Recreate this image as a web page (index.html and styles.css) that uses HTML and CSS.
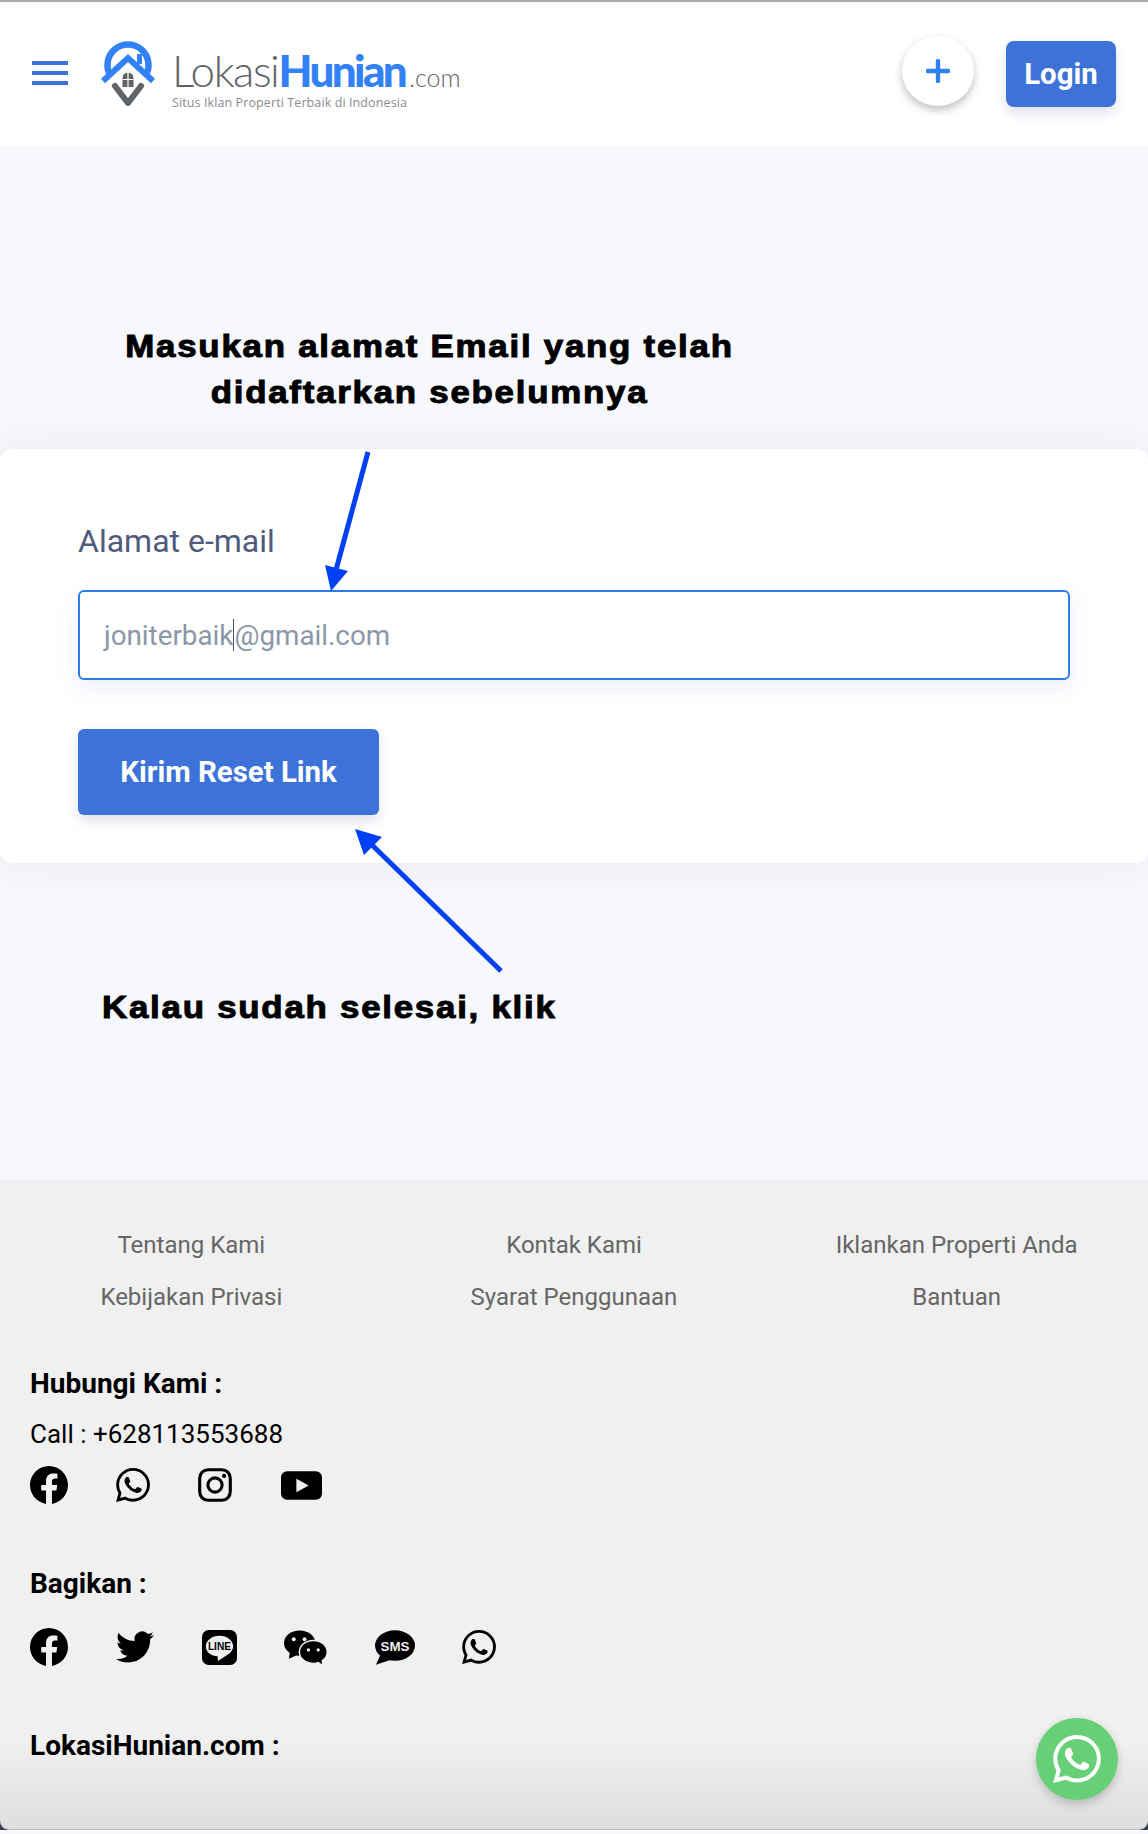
FILE: index.html
```html
<!DOCTYPE html>
<html>

<head>
    <title>Reset Password</title>
    <meta charset="utf-8">
    <link rel="stylesheet" href="styles.css">
</head>

<body>
    <header class="topbar">
        <div class="menu"><span></span><span></span><span></span></div>
        <div class="logo">
            <svg class="logo_icon" viewBox="0 0 56 66">
                <path d="M10.7 36 A20.5 20.5 0 1 1 45.3 36" fill="none" stroke="#3281f7" stroke-width="6.5" />
                <rect x="37" y="14" width="5" height="10" fill="#3281f7" />
                <path d="M3 41 L28 18 L53 41" fill="none" stroke="#3281f7" stroke-width="6" />
                <path d="M15 46 L28 63 L41 46" fill="none" stroke="#5f6368" stroke-width="6" stroke-linejoin="round" stroke-linecap="round" />
                <path d="M22.5 47 V38 A5.5 5.5 0 0 1 33.5 38 V47 Z" fill="#5f6368" />
                <path d="M28 32 V47 M22.5 39.5 H33.5" stroke="#fff" stroke-width="1.2" />
            </svg>
            <div class="logo_text">
                <div class="logo_name"><span class="logo_a">Lokasi</span><span class="logo_b">Hunian</span><span class="logo_c">.com</span></div>
                <div class="logo_tag">Situs Iklan Properti Terbaik di Indonesia</div>
            </div>
        </div>
        <div class="top_right">
            <a class="plus"><svg viewBox="0 0 24 24" width="24" height="24"><path d="M12 2 V22 M2 12 H22" stroke="#2f80f5" stroke-width="4.4" stroke-linecap="round" /></svg></a>
            <a class="btn btn_login">Login</a>
        </div>
    </header>

    <main class="content">
        <h2 class="note note_top">Masukan alamat Email yang telah<br>didaftarkan sebelumnya</h2>
        <section class="card">
            <label class="field_label">Alamat e-mail</label>
            <div class="field"><span>joniterbaik</span><i class="caret"></i><span>@gmail.com</span></div>
            <a class="btn btn_send">Kirim Reset Link</a>
        </section>
        <h2 class="note note_bottom">Kalau sudah selesai, klik</h2>
        <svg class="arrows" viewBox="0 0 1148 1034" width="1148" height="1034">
            <path d="M368 306 L336 424" stroke="#0040f5" stroke-width="5" fill="none" />
            <path d="M331 445 L325 419 L348 425 Z" fill="#0040f5" />
            <path d="M501 825 L370 697" stroke="#0040f5" stroke-width="5" fill="none" />
            <path d="M355 683 L382 691 L364 709 Z" fill="#0040f5" />
        </svg>
    </main>

    <div class="foot_wrap">
        <footer class="footer">
            <div class="foot_links">
                <a>Tentang Kami</a><a>Kontak Kami</a><a>Iklankan Properti Anda</a>
                <a>Kebijakan Privasi</a><a>Syarat Penggunaan</a><a>Bantuan</a>
            </div>

            <h4 class="foot_title">Hubungi Kami :</h4>
            <div class="call">Call : +628113553688</div>
            <div class="icons icons_contact">
                <svg viewBox="0 0 24 24" class="ic ic_fb"><use href="#fb" /></svg>
                <svg viewBox="0 0 24 24" class="ic ic_wa"><use href="#wa" /></svg>
                <svg viewBox="0 0 24 24" class="ic ic_ig">
                    <rect x="1.2" y="1.2" width="21.6" height="21.6" rx="6" fill="none" stroke="#000" stroke-width="2.2" />
                    <circle cx="12" cy="12" r="5" fill="none" stroke="#000" stroke-width="2.2" />
                    <circle cx="18.4" cy="5.6" r="1.5" />
                </svg>
                <svg viewBox="0 0 40 28" class="ic ic_yt">
                    <rect x="0" y="0" width="40" height="28" rx="6" />
                    <path d="M15 7.5 L27 14 L15 20.5 Z" fill="#f0f0f0" />
                </svg>
            </div>

            <h4 class="foot_title foot_share">Bagikan :</h4>
            <div class="icons icons_share">
                <svg viewBox="0 0 24 24" class="ic ic_fb"><use href="#fb" /></svg>
                <svg viewBox="0 0 24 24" class="ic ic_tw"><use href="#tw" /></svg>
                <svg viewBox="0 0 36 36" class="ic ic_line">
                    <rect width="36" height="36" rx="7" />
                    <path d="M18 6 C10 6 4 11 4 17 C4 23 10 27 16 27 L16.500 32 L27 25 C30 23 32 20 32 17 C32 11 26 6 18 6 Z" fill="#f0f0f0" />
                    <text x="18" y="21" class="line_text">LINE</text>
                </svg>
                <svg viewBox="0 0 44 36" class="ic ic_wc">
                    <ellipse cx="16" cy="14" rx="16" ry="13" />
                    <path d="M6 23 L5 30 L14 26 Z" />
                    <ellipse cx="30" cy="23" rx="15" ry="12.5" fill="#f0f0f0" />
                    <ellipse cx="30" cy="23" rx="13.5" ry="11" />
                    <path d="M34 32 L39 36 L38 29 Z" />
                    <circle cx="10" cy="10" r="2" fill="#f0f0f0" />
                    <circle cx="21" cy="10" r="2" fill="#f0f0f0" />
                    <circle cx="25" cy="21" r="1.7" fill="#f0f0f0" />
                    <circle cx="35" cy="21" r="1.7" fill="#f0f0f0" />
                </svg>
                <svg viewBox="0 0 42 36" class="ic ic_sms">
                    <ellipse cx="21" cy="16" rx="21" ry="16" />
                    <path d="M6 25 L1 36 L16 31 Z" />
                    <text x="21" y="21.500" class="sms_text">SMS</text>
                </svg>
                <svg viewBox="0 0 24 24" class="ic ic_wa"><use href="#wa" /></svg>
            </div>

            <h4 class="foot_title foot_site">LokasiHunian.com :</h4>
        </footer>
    </div>

    <a class="wa_float"><svg viewBox="0 0 24 24" width="48" height="48" fill="#fff"><use href="#wa" /></svg></a>

    <svg class="defs">
        <defs>
            <path id="fb" d="M24 12.073c0-6.627-5.373-12-12-12s-12 5.373-12 12c0 5.99 4.388 10.954 10.125 11.854v-8.385H7.078v-3.47h3.047V9.43c0-3.007 1.792-4.669 4.533-4.669 1.312 0 2.686.235 2.686.235v2.953H15.83c-1.491 0-1.956.925-1.956 1.874v2.25h3.328l-.532 3.47h-2.796v8.385C19.612 23.027 24 18.062 24 12.073z" />
            <path id="wa" d="M17.472 14.382c-.297-.149-1.758-.867-2.03-.967-.273-.099-.471-.148-.67.15-.197.297-.767.966-.94 1.164-.173.199-.347.223-.644.075-.297-.15-1.255-.463-2.39-1.475-.883-.788-1.48-1.761-1.653-2.059-.173-.297-.018-.458.13-.606.134-.133.298-.347.446-.52.149-.174.198-.298.298-.497.099-.198.05-.371-.025-.52-.075-.149-.669-1.612-.916-2.207-.242-.579-.487-.5-.669-.51-.173-.008-.371-.01-.57-.01-.198 0-.52.074-.792.372-.272.297-1.04 1.016-1.04 2.479 0 1.462 1.065 2.875 1.213 3.074.149.198 2.096 3.2 5.077 4.487.709.306 1.262.489 1.694.625.712.227 1.36.195 1.871.118.571-.085 1.758-.719 2.006-1.413.248-.694.248-1.289.173-1.413-.074-.124-.272-.198-.57-.347m-5.421 7.403h-.004a9.87 9.87 0 01-5.031-1.378l-.361-.214-3.741.982.998-3.648-.235-.374a9.86 9.86 0 01-1.51-5.26c.001-5.45 4.436-9.884 9.888-9.884 2.64 0 5.122 1.03 6.988 2.898a9.825 9.825 0 012.893 6.994c-.003 5.45-4.437 9.884-9.885 9.884m8.413-18.297A11.815 11.815 0 0012.05 0C5.495 0 .16 5.335.157 11.892c0 2.096.547 4.142 1.588 5.945L.057 24l6.305-1.654a11.882 11.882 0 005.683 1.448h.005c6.554 0 11.89-5.335 11.893-11.893a11.821 11.821 0 00-3.48-8.413z" />
            <path id="tw" d="M23.953 4.57a10 10 0 01-2.825.775 4.958 4.958 0 002.163-2.723c-.951.555-2.005.959-3.127 1.184a4.92 4.92 0 00-8.384 4.482C7.69 8.095 4.067 6.13 1.64 3.162a4.822 4.822 0 00-.666 2.475c0 1.71.87 3.213 2.188 4.096a4.904 4.904 0 01-2.228-.616v.06a4.923 4.923 0 003.946 4.827 4.996 4.996 0 01-2.212.085 4.936 4.936 0 004.604 3.417 9.867 9.867 0 01-6.102 2.105c-.39 0-.779-.023-1.17-.067a13.995 13.995 0 007.557 2.209c9.053 0 13.998-7.496 13.998-13.985 0-.21 0-.42-.015-.63A9.935 9.935 0 0024 4.59z" />
        </defs>
    </svg>
</body>

</html>
```

FILE: styles.css
```css
html,
body {
    margin: 0;
    padding: 0;
}

body {
    height: 1834px;
    overflow: hidden;
    font-family: Roboto, "Liberation Sans", sans-serif;
    background: #f7f8fd;
}

a {
    cursor: pointer;
}

.topbar {
    height: 144px;
    border-top: 2px solid #ababab;
    background: #fff;
    display: flex;
    align-items: center;
    padding: 0 32px;
}

.menu {
    width: 36px;
    display: flex;
    flex-direction: column;
    gap: 6px;
    margin-top: -2px;
}

.menu span {
    height: 4px;
    background: #3d72d9;
}

.logo {
    display: flex;
    align-items: flex-start;
    margin-left: 32px;
    margin-top: 2px;
}

.logo_icon {
    width: 56px;
    height: 66px;
}

.logo_text {
    margin-left: 16px;
    margin-top: 8px;
    color: #5f6368;
}

.logo_name {
    font-family: Lato, sans-serif;
    font-size: 44px;
    line-height: 44px;
    letter-spacing: -1.5px;
    white-space: nowrap;
}

.logo_a {
    font-weight: 300;
}

.logo_b {
    font-weight: 900;
    letter-spacing: -2.6px;
    color: #3281f7;
}

.logo_c {
    font-size: 25px;
    font-weight: 300;
    letter-spacing: 0;
    margin-left: 4px;
}

.logo_tag {
    margin-top: -3px;
    font-family: "Open Sans", sans-serif;
    font-size: 12.5px;
    line-height: 14px;
    color: #8a8c90;
    letter-spacing: .1px;
    white-space: nowrap;
}

.top_right {
    margin-left: auto;
    display: flex;
    align-items: center;
    gap: 32px;
}

.plus {
    width: 72px;
    height: 70px;
    border-radius: 50%;
    background: #fff;
    box-shadow: 0 4px 8px rgba(0, 0, 0, .25);
    display: flex;
    align-items: center;
    justify-content: center;
    margin-top: -6px;
}

.plus svg {
    margin-top: -1px;
}

.btn {
    display: flex;
    align-items: center;
    justify-content: center;
    background: #3d72d9;
    color: #fff;
    font-weight: 700;
    box-shadow: 0 6px 12px rgba(40, 60, 120, .15);
}

.btn_login {
    width: 110px;
    height: 66px;
    border-radius: 8px;
    font-size: 29.4px;
}

.content {
    position: relative;
    height: 1034px;
}

.note {
    margin: 0;
    font-family: "Liberation Sans", sans-serif;
    font-weight: 700;
    color: #000;
    white-space: nowrap;
    letter-spacing: 1.6px;
    -webkit-text-stroke: 1px #000;
    transform: scaleX(1.09);
}

.note_top {
    position: absolute;
    left: 126px;
    top: 177px;
    width: 607px;
    font-size: 32px;
    line-height: 46px;
    text-align: center;
}

.note_bottom {
    position: absolute;
    left: 102px;
    top: 838px;
    font-size: 32px;
    line-height: 46px;
    transform-origin: left center;
}

.card {
    position: absolute;
    left: 0;
    right: 0;
    top: 303px;
    height: 414px;
    box-sizing: border-box;
    padding: 73px 78px 0;
    background: #fff;
    border-radius: 12px;
    box-shadow: 0 0 40px rgba(60, 70, 110, .08);
}

.field_label {
    display: block;
    font-size: 32px;
    line-height: 38px;
    color: #4f5b7b;
}

.field {
    margin-top: 30px;
    height: 90px;
    box-sizing: border-box;
    border: 2px solid #2f7bf3;
    border-radius: 6px;
    background: #fff;
    padding: 0 24px;
    display: flex;
    align-items: center;
    font-size: 27.8px;
    color: #8a97a8;
    box-shadow: 0 8px 24px rgba(60, 90, 200, .1);
}

.caret {
    width: 1px;
    height: 32px;
    background: #4a5468;
}

.btn_send {
    margin-top: 49px;
    width: 301px;
    height: 86px;
    border-radius: 6px;
    font-size: 29.4px;
}

.arrows {
    position: absolute;
    left: 0;
    top: 0;
    pointer-events: none;
}

.foot_wrap {
    height: 650px;
    background: #3c3c55;
}

.footer {
    height: 650px;
    box-sizing: border-box;
    padding: 47px 30px 0;
    background: linear-gradient(#f0f0f0 0, #f0f0f0 560px, #dedede 649px);
    border-bottom: 1px solid #bdbdbd;
    border-radius: 0 0 9px 9px;
}

.foot_links {
    display: grid;
    grid-template-columns: repeat(3, 1fr);
    row-gap: 16px;
    margin: 0 -30px;
    text-align: center;
    font-size: 24px;
    line-height: 36px;
    color: #666;
}

.foot_title {
    margin: 0;
    font-size: 28px;
    line-height: 36px;
    font-weight: 700;
    color: #000;
}

.foot_links + .foot_title {
    margin-top: 51px;
}

.call {
    margin-top: 14px;
    font-size: 26px;
    line-height: 36px;
    color: #000;
}

.icons {
    display: flex;
    align-items: center;
    height: 40px;
}

.icons_contact {
    margin-top: 13px;
}

.ic {
    flex: none;
    display: block;
}

.ic_fb {
    width: 38px;
    height: 38px;
}

.ic_wa {
    width: 34px;
    height: 34px;
}

.ic_ig {
    width: 34px;
    height: 34px;
}

.ic_yt {
    width: 41px;
    height: 29px;
}

.ic_tw {
    width: 38px;
    height: 38px;
}

.ic_line {
    width: 35px;
    height: 35px;
}

.ic_wc {
    width: 43px;
    height: 36px;
}

.ic_sms {
    width: 40px;
    height: 35px;
}

.icons_contact .ic_wa {
    margin-left: 48px;
}

.icons_contact .ic_ig {
    margin-left: 48px;
}

.icons_contact .ic_yt {
    margin-left: 49px;
}

.foot_share {
    margin-top: 61px;
}

.icons_share {
    margin-top: 25px;
}

.icons_share .ic_tw {
    margin-left: 48px;
}

.icons_share .ic_line {
    margin-left: 48px;
}

.icons_share .ic_wc {
    margin-left: 47px;
}

.icons_share .ic_sms {
    margin-left: 48px;
}

.icons_share .ic_wa {
    margin-left: 47px;
}

.line_text {
    font-family: "Liberation Sans", sans-serif;
    font-size: 10.5px;
    font-weight: 700;
    text-anchor: middle;
}

.sms_text {
    font-family: "Liberation Sans", sans-serif;
    font-size: 14px;
    font-weight: 700;
    text-anchor: middle;
    fill: #f0f0f0;
}

.foot_site {
    margin-top: 61px;
}

.wa_float {
    position: absolute;
    left: 1036px;
    top: 1718px;
    width: 82px;
    height: 82px;
    border-radius: 50%;
    background: #67d076;
    box-shadow: 0 4px 10px rgba(0, 0, 0, .2);
    display: flex;
    align-items: center;
    justify-content: center;
}

.defs {
    position: absolute;
    width: 0;
    height: 0;
}
```
